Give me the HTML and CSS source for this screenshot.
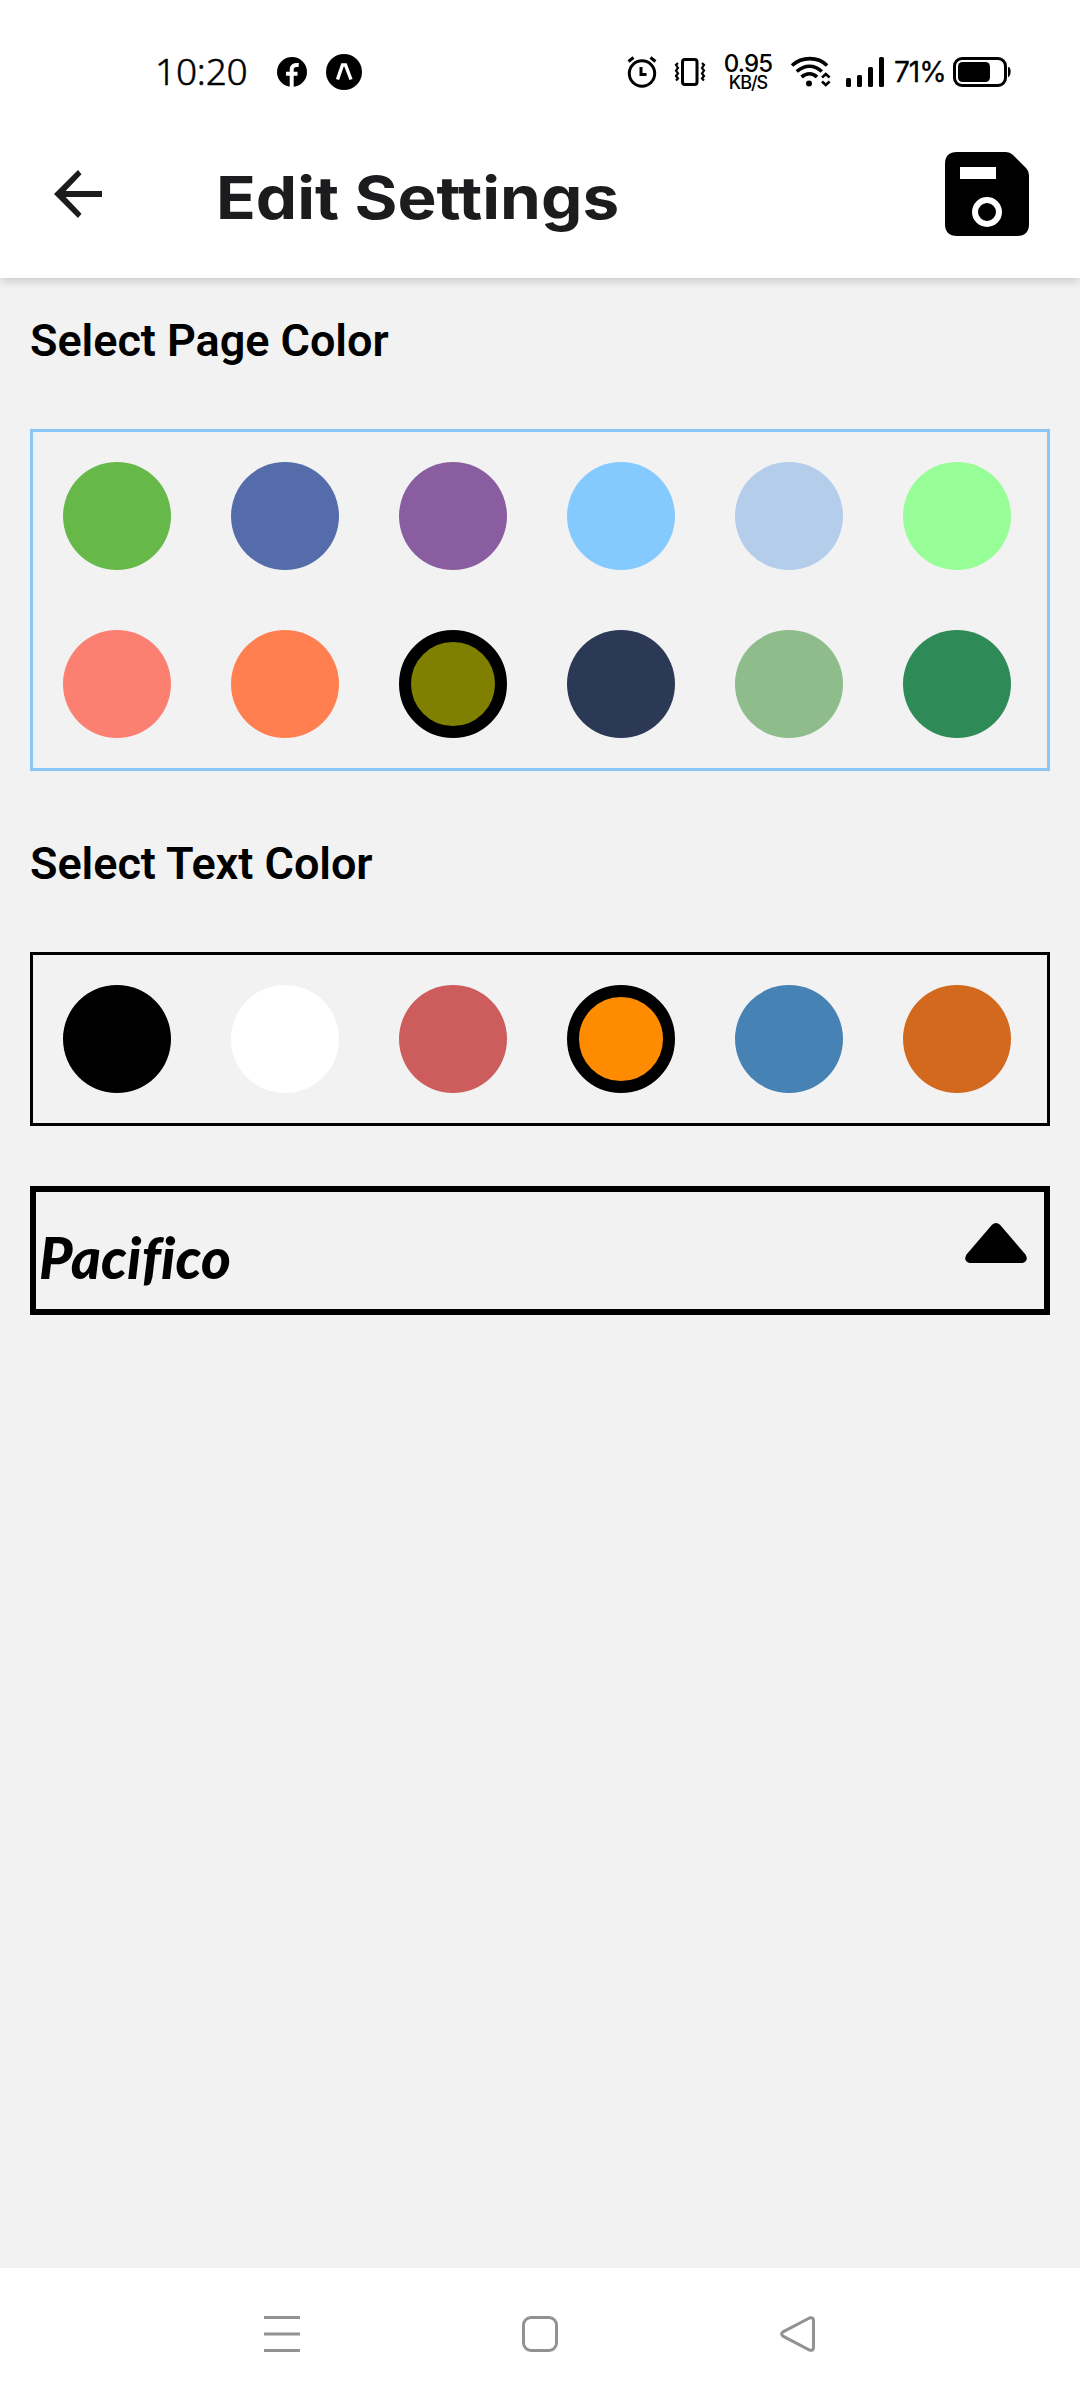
FILE: index.html
```html
<!DOCTYPE html>
<html lang="en">
<head>
<meta charset="utf-8">
<title>Edit Settings</title>
<link rel="stylesheet" href="styles.css">
</head>
<body>
<div class="status">
  <span class="time">10:20</span>
  <svg class="fb" width="30" height="30" viewBox="0 0 30 30"><circle cx="15" cy="15" r="15"/><path d="M14.700 30V18.500M9 16.800h11.500M14.700 19v-6c0-4 2-5.500 7-5" fill="none" stroke="#fff" stroke-width="4"/></svg>
  <svg class="expo" width="36" height="36" viewBox="0 0 36 36"><circle cx="18" cy="18" r="18"/><path d="M11.500 25.500l5-14.500h3l5.500 14.500" fill="none" stroke="#fff" stroke-width="3.400"/></svg>
  <div class="indicators">
    <svg class="alarm" width="30" height="32" viewBox="0 0 30 32"><g fill="none" stroke="#000" stroke-width="3"><circle cx="15" cy="17.500" r="12.700"/><path d="M14 11v7.500h5.500M1.500 5.500l5-4M28.500 5.500l-5-4"/></g></svg>
    <svg class="vibrate" width="32" height="30" viewBox="0 0 32 30"><g fill="none" stroke="#000" stroke-width="3"><rect x="8.500" y="2.500" width="14.500" height="25" rx="2.500"/><path d="M4 6l-2 2 2 3-2 2.500 2 3-2 2.500 2 2.500-2 2M28 6l2 2-2 3 2 2.500-2 3 2 2.500-2 2.500 2 2" stroke-width="2.200"/></g></svg>
    <div class="speed"><span class="rate">0.95</span><span class="unit">KB/S</span></div>
    <svg class="wifi" width="42" height="32" viewBox="0 0 42 32"><g fill="none" stroke="#000" stroke-width="3.600"><path d="M2 9.500C12 .3 28 .3 37 9.500"/><path d="M6.800 15.500c8-7 17.500-7 25 0"/><path d="M11.500 21c5-4.200 11-4.200 15.500 0"/><path d="M32 21.500l3.800-3.500 3.800 3.500M32 25.500l3.800 3.500 3.800-3.500" stroke-width="2.600"/></g><circle cx="19" cy="27.500" r="3"/></svg>
    <svg class="signal" width="38" height="30" viewBox="0 0 38 30"><rect y="21" width="5" height="9" rx="1.500"/><rect x="11" y="18" width="5" height="12" rx="1.500"/><rect x="22" y="10" width="5" height="20" rx="1.500"/><rect x="33" width="5" height="30" rx="1.500"/></svg>
    <span class="percent">71%</span>
    <svg class="battery" width="58" height="30" viewBox="0 0 58 30"><rect x="1.500" y="1.500" width="51" height="27" rx="7.500" fill="none" stroke="#000" stroke-width="3"/><rect x="5" y="5" width="32" height="20" rx="4.500"/><path d="M55 10c4 0 3 10 0 10z"/></svg>
  </div>
</div>
<header class="header">
  <svg width="48" height="48" viewBox="0 0 48 48"><path d="M48 21H11.600L27.500 4.300 24 0 0 24l24 24 3.500-4.300L11.600 27H48z" fill="#1c1c1e"/></svg>
  <h1 class="title">Edit Settings</h1>
  <svg class="save" width="84" height="84" viewBox="0 0 84 84"><path d="M12 0H61Q65 0 68 3L81 16Q84 19 84 23V72Q84 84 72 84H12Q0 84 0 72V12Q0 0 12 0z"/><path d="M15 15h36v12H15z" fill="#fff"/><circle cx="42" cy="60" r="12" fill="none" stroke="#fff" stroke-width="6"/></svg>
</header>
<main class="content">
  <h2 class="label">Select Page Color</h2>
  <div class="palette page-palette">
    <i class="dot green"></i><i class="dot indigo"></i><i class="dot purple"></i><i class="dot sky"></i><i class="dot pale-blue"></i><i class="dot mint"></i>
    <i class="dot salmon"></i><i class="dot coral"></i><i class="dot olive selected"></i><i class="dot navy"></i><i class="dot sage"></i><i class="dot sea"></i>
  </div>
  <h2 class="label">Select Text Color</h2>
  <div class="palette">
    <i class="dot black"></i><i class="dot white"></i><i class="dot red"></i><i class="dot orange selected"></i><i class="dot steel"></i><i class="dot chocolate"></i>
  </div>
  <div class="dropdown">
    <span class="font-name">Pacifico</span>
    <svg width="62" height="40" viewBox="0 0 62 40"><path d="M27 1.800Q31-1.600 35 1.800L60.500 31.500Q64 38 57.500 40H4.500Q-2 38 1.500 31.500z"/></svg>
  </div>
</main>
<nav class="nav">
  <svg width="36" height="36" viewBox="0 0 36 36"><path d="M0 1.500h36M0 18h36M0 34.500h36"/></svg>
  <svg width="36" height="36" viewBox="0 0 36 36"><rect x="1.500" y="1.500" width="33" height="33" rx="7.500"/></svg>
  <svg width="36" height="36" viewBox="0 0 36 36"><path d="M29.500 2L3 15.800Q.3 18 3 20.200L29.500 34Q33.500 35 33.500 31.500V4.500Q33.500 1 29.500 2z"/></svg>
</nav>
</body>
</html>
```
FILE: styles.css
```css
* { box-sizing: border-box; }
body { margin: 0; width: 1080px; height: 2400px; display: flex; flex-direction: column; background: #f2f2f2; font-family: Roboto, sans-serif; color: #000; }
svg { display: block; flex: none; }
h1, h2 { margin: 0; }
.status { position: relative; z-index: 1; height: 144px; display: flex; align-items: center; padding: 0 69px 0 155px; background: #fff; }
.time { width: 122px; padding-bottom: 2px; font: 300 37px/40px "Noto Sans", sans-serif; letter-spacing: -0.2px; -webkit-text-stroke: 0.5px #000; }
.expo { margin-left: 19px; }
.indicators { flex: 1; display: flex; align-items: center; justify-content: flex-end; }
.vibrate { margin-left: 17px; }
.speed { width: 50px; margin-left: 17px; display: flex; flex-direction: column; align-items: center; font-family: Inter, sans-serif; font-weight: 500; white-space: nowrap; }
.rate { font-size: 24px; line-height: 21px; letter-spacing: -0.8px; }
.unit { font-size: 18px; line-height: 18px; letter-spacing: -1px; }
.wifi { margin-left: 17px; }
.signal { margin-left: 14px; }
.percent { width: 59px; margin-left: 10px; font: 400 28px/30px Inter, sans-serif; letter-spacing: -1px; white-space: nowrap; -webkit-text-stroke: 0.3px #000; }
.header { position: relative; height: 134px; display: flex; align-items: center; padding: 0 51px 34px 54px; background: #fff; box-shadow: 0 2px 10px rgba(0, 0, 0, .2); }
.header .save { margin-left: auto; }
.title { margin: 7px 0 0 114px; font: 700 59px/70px Inter, sans-serif; color: #1c1c1e; white-space: nowrap; transform: scaleX(1.112); transform-origin: left; }
.content { flex: 1; padding: 0 30px; }
.label { padding-top: 36px; height: 151px; font-size: 45px; line-height: 53px; font-weight: 600; letter-spacing: -0.05px; }
.palette { display: grid; grid-template-columns: repeat(6, 108px); gap: 60px; padding: 30px; border: 3px solid #000; }
.page-palette { border-color: #8bc6f4; margin-bottom: 30px; }
.dot { height: 108px; border-radius: 50%; }
.selected { border: 12px solid #000; }
.green { background: #66b949; }
.indigo { background: #546ca9; }
.purple { background: #8a5da1; }
.sky { background: #84caff; }
.pale-blue { background: #b3cdea; }
.mint { background: #98fe97; }
.salmon { background: #fb8072; }
.coral { background: #ff7f50; }
.olive { background-color: #808000; }
.navy { background: #2c3956; }
.sage { background: #8fbc8b; }
.sea { background: #2e8b57; }
.black { background: #000; }
.white { background: #fff; }
.red { background: #cd5c5c; }
.orange { background-color: #ff8c00; }
.steel { background: #4682b4; }
.chocolate { background: #d2691e; }
.dropdown { height: 129px; margin-top: 60px; display: flex; justify-content: space-between; align-items: flex-start; padding: 31px 17px 0 3px; border: 6px solid #000; }
.font-name { font: italic 900 57px/66px Lato, sans-serif; letter-spacing: 0.2px; padding-top: 1px; }
.nav { height: 132px; display: flex; justify-content: center; gap: 222px; padding-top: 48px; background: #fff; fill: none; stroke: #929292; stroke-width: 3; }
```
